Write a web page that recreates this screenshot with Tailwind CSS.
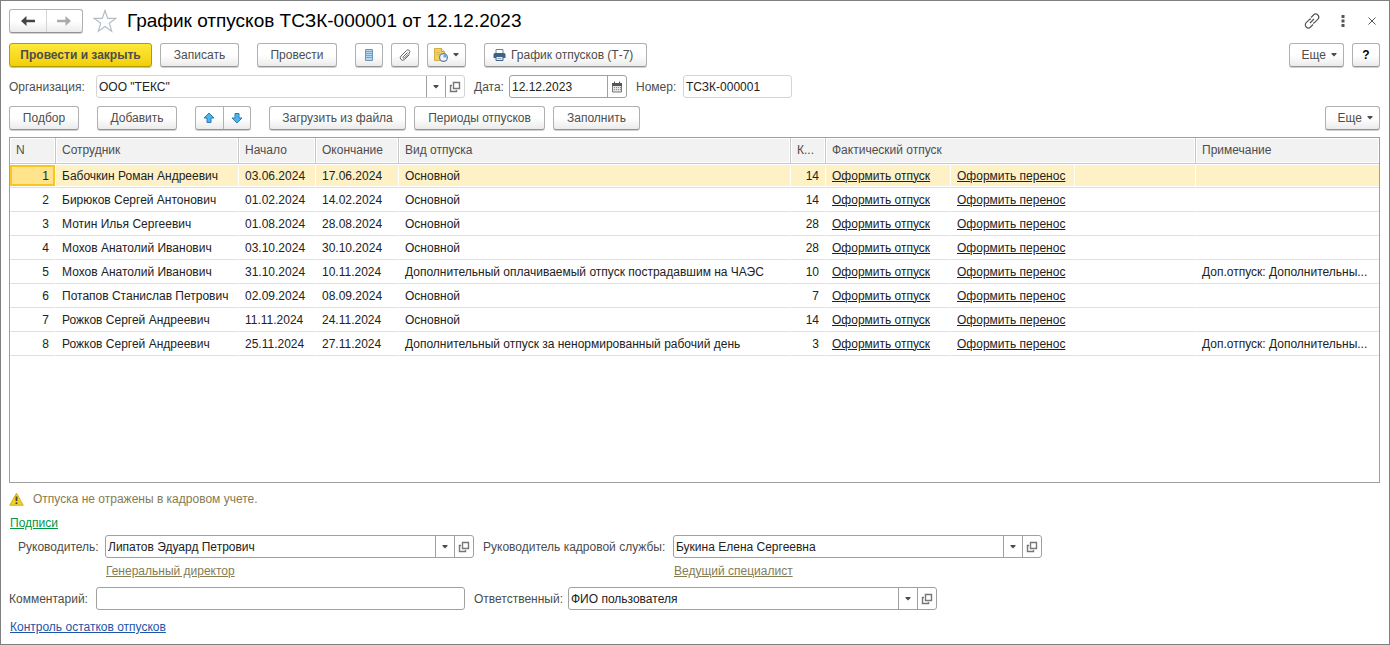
<!DOCTYPE html>
<html lang="ru">
<head>
<meta charset="utf-8">
<title>График отпусков ТСЗК-000001 от 12.12.2023</title>
<script src="https://cdn.jsdelivr.net/npm/@tailwindcss/browser@4"></script>
</head>
<body class="bg-white font-['Liberation_Sans',Arial,sans-serif] text-[12px] leading-4 text-[#4d4d4d]">
<svg class="hidden" aria-hidden="true">
  <symbol id="open" viewBox="0 0 12 12"><path d="M4.500 1.500h6v6h-6zM3 4.500H1.500v6h6V9" fill="none" stroke="#777" stroke-width="1.400"/></symbol>
  <symbol id="caret" viewBox="0 0 6 4"><path d="M.5 0h5v1L3 3.500.5 1z" fill="#4d4d4d"/></symbol>
</svg>
<main class="flex min-h-screen flex-col border border-[#808080] pt-2 pr-[9px] pb-[9px] pl-2">

  <header class="flex h-6 items-center">
    <div class="flex h-6 w-[74px] rounded-[3px] border border-[#b0b0b0] border-b-[#949494] bg-linear-to-b from-white from-50% to-[#ebebeb] shadow-[0_1px_0_#d0d0d0]">
      <button type="button" aria-label="Назад" class="flex flex-1 items-center justify-center border-r border-[#d4d4d4]"><svg class="h-3 w-4" viewBox="0 0 16 12"><path d="M6.500 1v3.800H15v2.400H6.500V11L1 6z" fill="#444"/></svg></button>
      <button type="button" aria-label="Вперед" class="flex flex-1 items-center justify-center"><svg class="h-3 w-4" viewBox="0 0 16 12"><path d="M9.500 1v3.800H1v2.400h8.500V11L15 6z" fill="#aaa"/></svg></button>
    </div>
    <button type="button" aria-label="В избранное" class="ml-2.5"><svg class="h-6 w-6" viewBox="0 0 24 24"><path d="M12 1.500l2.700 7.900h8.100l-6.500 4.900 2.400 7.900-6.700-4.700-6.700 4.700 2.400-7.900-6.500-4.900h8.100z" fill="none" stroke="#b4bcc6" stroke-width="1.200"/></svg></button>
    <h1 class="ml-2.5 text-[19px] leading-6 text-black">График отпусков ТСЗК-000001 от 12.12.2023</h1>
    <div class="ml-auto flex items-center gap-[17px]">
      <button type="button" aria-label="Ссылка"><svg class="h-4 w-4" viewBox="0 0 16 16" fill="none" stroke="#555" stroke-width="1.200"><path d="M7 4.500l2.500-2.500a2.900 2.900 0 0 1 4.300 4.300l-3.100 3.100a2.900 2.900 0 0 1-1.700.8M9 11.500l-2.500 2.500a2.900 2.900 0 0 1-4.300-4.300l3.100-3.100a2.900 2.900 0 0 1 1.700-.8M6 10l4-4"/></svg></button>
      <button type="button" aria-label="Меню"><svg class="h-4 w-3" viewBox="0 0 12 16" fill="#555"><path d="M4.500 2h3v3h-3zM4.500 6.500h3v3h-3zM4.500 11h3v3h-3z"/></svg></button>
      <button type="button" aria-label="Закрыть" class="pr-0.5"><svg class="h-4 w-3" viewBox="0 0 12 16" stroke="#555"><path d="M2.500 4.500l7 7M9.500 4.500l-7 7"/></svg></button>
    </div>
  </header>

  <div class="mt-2.5 flex h-6 items-stretch">
    <button type="button" class="w-[143px] rounded-[3px] border border-[#b39b00] bg-linear-to-b from-[#ffe838] to-[#f2cf00] font-bold shadow-[0_1px_0_#d0c890]">Провести и закрыть</button>
    <button type="button" class="ml-2 w-[79px] rounded-[3px] border border-[#b0b0b0] border-b-[#949494] bg-linear-to-b from-white from-50% to-[#ebebeb] shadow-[0_1px_0_#d0d0d0]">Записать</button>
    <button type="button" class="ml-[18px] w-20 rounded-[3px] border border-[#b0b0b0] border-b-[#949494] bg-linear-to-b from-white from-50% to-[#ebebeb] shadow-[0_1px_0_#d0d0d0]">Провести</button>
    <button type="button" aria-label="Список" class="ml-[18px] flex w-7 items-center justify-center rounded-[3px] border border-[#b0b0b0] border-b-[#949494] bg-linear-to-b from-white from-50% to-[#ebebeb] shadow-[0_1px_0_#d0d0d0]"><svg class="h-3 w-2" viewBox="0 0 8 12"><path d="M.5.5h7v11h-7z" fill="#b7d6ee" stroke="#6b96b8"/><path d="M1 2.500h6M1 4.500h6M1 6.500h6M1 8.500h6" stroke="#7ba6c8"/></svg></button>
    <button type="button" aria-label="Вложения" class="ml-2 flex w-7 items-center justify-center rounded-[3px] border border-[#b0b0b0] border-b-[#949494] bg-linear-to-b from-white from-50% to-[#ebebeb] shadow-[0_1px_0_#d0d0d0]"><svg class="h-3 w-3" viewBox="0 0 12 12" fill="none" stroke="#666"><path d="M8.500 3.500L4.200 7.800a.8.8 0 0 0 1.200 1.200l4.900-4.900a1.800 1.800 0 0 0-2.700-2.700L2 7a2.400 2.400 0 0 0 3.500 3.500L10.500 5.500"/></svg></button>
    <button type="button" aria-label="Напоминание" class="ml-2 flex w-[39px] items-center justify-center gap-[5px] rounded-[3px] border border-[#b0b0b0] border-b-[#949494] bg-linear-to-b from-white from-50% to-[#ebebeb] shadow-[0_1px_0_#d0d0d0]"><svg class="h-[14px] w-[14px]" viewBox="0 0 14 14"><path d="M.5.5h7l3 3v9H.5z" fill="#f3cf63" stroke="#d4ae48"/><path d="M7.500.5v3h3" fill="#fff3c4" stroke="#c9a23a"/><path d="M2 4.500h4M2 6.500h4" stroke="#dcb650"/><circle cx="9.500" cy="9.500" r="3.900" fill="#eef5fc" stroke="#5d7fa8" stroke-width="1.200"/><path d="M9.500 9.500V6.300a3.200 3.200 0 0 1 3.200 3.200z" fill="#6ea3dc"/></svg><svg class="h-1 w-1.5"><use href="#caret"/></svg></button>
    <button type="button" class="ml-[18px] flex w-[163px] items-center justify-start gap-[5px] rounded-[3px] border border-[#b0b0b0] border-b-[#949494] bg-linear-to-b from-white from-50% to-[#ebebeb] pl-2 shadow-[0_1px_0_#d0d0d0]"><svg class="h-3 w-[13px]" viewBox="0 0 13 12"><path d="M3 .5h7v4H3z" fill="#fff" stroke="#6b8299"/><path d="M.5 5.500a1.500 1.500 0 0 1 1.500-1.500h9a1.500 1.500 0 0 1 1.500 1.500V9H.5z" fill="#3e6285"/><path d="M3 7.500h7v4H3z" fill="#e8f0f7" stroke="#3e6285"/><path d="M4.500 9.500h4" stroke="#8aa5bd"/></svg>График отпусков (Т-7)</button>
    <button type="button" class="ml-auto flex w-[55px] items-center justify-end gap-[5px] rounded-[3px] border border-[#b0b0b0] border-b-[#949494] bg-linear-to-b from-white from-50% to-[#ebebeb] pr-1.5 shadow-[0_1px_0_#d0d0d0]">Еще <svg class="h-1 w-1.5"><use href="#caret"/></svg></button>
    <button type="button" class="ml-2 w-7 rounded-[3px] border border-[#b0b0b0] border-b-[#949494] bg-linear-to-b from-white from-50% to-[#ebebeb] font-bold text-black shadow-[0_1px_0_#d0d0d0]">?</button>
  </div>

  <div class="mt-2 flex h-[23px] items-center">
    <label for="org" class="w-[87px]">Организация:</label>
    <div class="flex h-full w-[369px] rounded-[3px] border border-[#d4d4d4]">
      <input id="org" type="text" value="ООО &quot;ТЕКС&quot;" class="min-w-0 flex-1 px-0.5 text-[#222] outline-none">
      <button type="button" aria-label="Выбрать" class="flex w-[19px] items-center justify-center border-l border-[#a0a0a0]"><svg class="h-1 w-1.5"><use href="#caret"/></svg></button>
      <button type="button" aria-label="Открыть" class="flex w-[19px] items-center justify-center border-l border-[#a0a0a0]"><svg class="h-3 w-3"><use href="#open"/></svg></button>
    </div>
    <label for="date" class="ml-[9px] w-[35px]">Дата:</label>
    <div class="flex h-full w-[118px] rounded-[3px] border border-[#a0a0a0]">
      <input id="date" type="text" value="12.12.2023" class="min-w-0 flex-1 px-0.5 text-[#222] outline-none">
      <button type="button" aria-label="Календарь" class="flex w-[19px] items-center justify-center border-l border-[#a0a0a0]"><svg class="h-3 w-3" viewBox="0 0 12 12"><path d="M1.500 2.500h9v8.500h-9z" fill="#e4e4e4" stroke="#777"/><path d="M1 2h10v3H1z" fill="#555"/><path d="M3.500 .5v2M8.500 .5v2" stroke="#555"/><path d="M3 6.500h7M3 8.500h7" stroke="#888" stroke-dasharray="1 1"/></svg></button>
    </div>
    <label for="num" class="ml-[9px] w-[47px]">Номер:</label>
    <input id="num" type="text" value="ТСЗК-000001" class="h-full w-[109px] rounded-[3px] border border-[#d4d4d4] px-0.5 text-[#222] outline-none">
  </div>

  <div class="mt-2 flex h-6 items-stretch">
    <button type="button" class="w-[70px] rounded-[3px] border border-[#b0b0b0] border-b-[#949494] bg-linear-to-b from-white from-50% to-[#ebebeb] shadow-[0_1px_0_#d0d0d0]">Подбор</button>
    <button type="button" class="ml-[18px] w-20 rounded-[3px] border border-[#b0b0b0] border-b-[#949494] bg-linear-to-b from-white from-50% to-[#ebebeb] shadow-[0_1px_0_#d0d0d0]">Добавить</button>
    <div class="ml-[18px] flex w-14 rounded-[3px] border border-[#b0b0b0] border-b-[#949494] bg-linear-to-b from-white from-50% to-[#ebebeb] shadow-[0_1px_0_#d0d0d0]">
      <button type="button" aria-label="Вверх" class="flex flex-1 items-center justify-center border-r border-[#b0b0b0]"><svg class="h-3 w-3" viewBox="0 0 12 12"><path d="M6 1l5 5H8v4.500H4V6H1z" fill="#4db4ee" stroke="#2a7db5" stroke-linejoin="round"/></svg></button>
      <button type="button" aria-label="Вниз" class="flex flex-1 items-center justify-center"><svg class="h-3 w-3" viewBox="0 0 12 12"><path d="M6 11l5-5H8V1.500H4V6H1z" fill="#4db4ee" stroke="#2a7db5" stroke-linejoin="round"/></svg></button>
    </div>
    <button type="button" class="ml-[18px] w-[137px] rounded-[3px] border border-[#b0b0b0] border-b-[#949494] bg-linear-to-b from-white from-50% to-[#ebebeb] shadow-[0_1px_0_#d0d0d0]">Загрузить из файла</button>
    <button type="button" class="ml-2 w-[131px] rounded-[3px] border border-[#b0b0b0] border-b-[#949494] bg-linear-to-b from-white from-50% to-[#ebebeb] shadow-[0_1px_0_#d0d0d0]">Периоды отпусков</button>
    <button type="button" class="ml-2 w-[87px] rounded-[3px] border border-[#b0b0b0] border-b-[#949494] bg-linear-to-b from-white from-50% to-[#ebebeb] shadow-[0_1px_0_#d0d0d0]">Заполнить</button>
    <button type="button" class="ml-auto flex w-[55px] items-center justify-end gap-[5px] rounded-[3px] border border-[#b0b0b0] border-b-[#949494] bg-linear-to-b from-white from-50% to-[#ebebeb] pr-1.5 shadow-[0_1px_0_#d0d0d0]">Еще <svg class="h-1 w-1.5"><use href="#caret"/></svg></button>
  </div>

  <div class="mt-[7px] flex-1 border border-[#a0a0a0]">
    <table class="w-full table-fixed border-separate border-spacing-0 text-[#222] [&_a]:underline [&_a]:underline-offset-1 [&_td]:h-6 [&_td]:truncate [&_td]:border-r [&_td]:border-b [&_td]:border-r-white [&_td]:border-b-[#e0e0e0] [&_td]:px-1.5 [&_th]:h-[26px] [&_th]:border-r [&_th]:border-b [&_th]:border-[#c8c8c8] [&_th]:bg-[#f2f2f2] [&_th]:px-1.5 [&_th]:pb-0.5 [&_th]:text-left [&_th]:font-normal [&_th]:whitespace-nowrap [&_th]:text-[#4d4d4d] [&_th]:shadow-[inset_0_0_0_1px_#fff] [&_th:last-child]:border-r-0 [&_td:last-child]:border-r-0">
      <colgroup><col class="w-[46px]"><col class="w-[183px]"><col class="w-[77px]"><col class="w-[83px]"><col class="w-[392px]"><col class="w-[35px]"><col class="w-[125px]"><col class="w-[124px]"><col class="w-[121px]"><col></colgroup>
      <thead>
        <tr><th>N</th><th>Сотрудник</th><th>Начало</th><th>Окончание</th><th>Вид отпуска</th><th>К...</th><th colspan="3">Фактический отпуск</th><th>Примечание</th></tr>
      </thead>
      <tbody>
        <tr class="[&_td]:bg-[#fef1c6] [&_td]:shadow-[inset_0_1px_0_#fff,inset_0_-1px_0_#fff] [&_td:first-child]:bg-[#ffe48d] [&_td:first-child]:shadow-[inset_0_1px_0_#fff,inset_0_-1px_0_#fff,inset_0_3px_0_#f9c51f,inset_0_-3px_0_#f9c51f,inset_2px_0_0_#f9c51f,inset_-2px_0_0_#f9c51f]"><td class="text-right">1</td><td>Бабочкин Роман Андреевич</td><td>03.06.2024</td><td>17.06.2024</td><td>Основной</td><td class="text-right">14</td><td><a href="#">Оформить отпуск</a></td><td><a href="#">Оформить перенос</a></td><td></td><td></td></tr>
        <tr><td class="text-right">2</td><td>Бирюков Сергей Антонович</td><td>01.02.2024</td><td>14.02.2024</td><td>Основной</td><td class="text-right">14</td><td><a href="#">Оформить отпуск</a></td><td><a href="#">Оформить перенос</a></td><td></td><td></td></tr>
        <tr><td class="text-right">3</td><td>Мотин Илья Сергеевич</td><td>01.08.2024</td><td>28.08.2024</td><td>Основной</td><td class="text-right">28</td><td><a href="#">Оформить отпуск</a></td><td><a href="#">Оформить перенос</a></td><td></td><td></td></tr>
        <tr><td class="text-right">4</td><td>Мохов Анатолий Иванович</td><td>03.10.2024</td><td>30.10.2024</td><td>Основной</td><td class="text-right">28</td><td><a href="#">Оформить отпуск</a></td><td><a href="#">Оформить перенос</a></td><td></td><td></td></tr>
        <tr><td class="text-right">5</td><td>Мохов Анатолий Иванович</td><td>31.10.2024</td><td>10.11.2024</td><td>Дополнительный оплачиваемый отпуск пострадавшим на ЧАЭС</td><td class="text-right">10</td><td><a href="#">Оформить отпуск</a></td><td><a href="#">Оформить перенос</a></td><td></td><td>Доп.отпуск: Дополнительны...</td></tr>
        <tr><td class="text-right">6</td><td>Потапов Станислав Петрович</td><td>02.09.2024</td><td>08.09.2024</td><td>Основной</td><td class="text-right">7</td><td><a href="#">Оформить отпуск</a></td><td><a href="#">Оформить перенос</a></td><td></td><td></td></tr>
        <tr><td class="text-right">7</td><td>Рожков Сергей Андреевич</td><td>11.11.2024</td><td>24.11.2024</td><td>Основной</td><td class="text-right">14</td><td><a href="#">Оформить отпуск</a></td><td><a href="#">Оформить перенос</a></td><td></td><td></td></tr>
        <tr><td class="text-right">8</td><td>Рожков Сергей Андреевич</td><td>25.11.2024</td><td>27.11.2024</td><td>Дополнительный отпуск за ненормированный рабочий день</td><td class="text-right">3</td><td><a href="#">Оформить отпуск</a></td><td><a href="#">Оформить перенос</a></td><td></td><td>Доп.отпуск: Дополнительны...</td></tr>
      </tbody>
    </table>
  </div>

  <p class="mt-2 flex items-center gap-[9px] text-[#857c53]"><svg class="h-[14px] w-[15px]" viewBox="0 0 15 14"><path d="M7.500 1.200l6.700 12H.8z" fill="#f2d21f" stroke="#cfae1c" stroke-linejoin="round"/><path d="M7.500 4.500v4.500M7.500 10.200v1.800" stroke="#444" stroke-width="1.800"/></svg>Отпуска не отражены в кадровом учете.</p>
  <div class="mt-2 flex pl-px"><a href="#" class="text-[#009646] underline underline-offset-1">Подписи</a></div>

  <div class="mt-1 flex">
    <label for="head" class="flex h-[23px] w-24 items-center pl-[9px]">Руководитель:</label>
    <div class="w-[369px]">
      <div class="flex h-[23px] rounded-[3px] border border-[#a0a0a0]">
        <input id="head" type="text" value="Липатов Эдуард Петрович" class="min-w-0 flex-1 px-0.5 text-[#222] outline-none">
        <button type="button" aria-label="Выбрать" class="flex w-[19px] items-center justify-center border-l border-[#a0a0a0]"><svg class="h-1 w-1.5"><use href="#caret"/></svg></button>
        <button type="button" aria-label="Открыть" class="flex w-[19px] items-center justify-center border-l border-[#a0a0a0]"><svg class="h-3 w-3"><use href="#open"/></svg></button>
      </div>
      <div class="mt-[5px] flex pl-px"><a href="#" class="text-[#857c53] underline underline-offset-1">Генеральный директор</a></div>
    </div>
    <label for="hr" class="ml-[9px] flex h-[23px] w-[190px] items-center">Руководитель кадровой службы:</label>
    <div class="w-[369px]">
      <div class="flex h-[23px] rounded-[3px] border border-[#a0a0a0]">
        <input id="hr" type="text" value="Букина Елена Сергеевна" class="min-w-0 flex-1 px-0.5 text-[#222] outline-none">
        <button type="button" aria-label="Выбрать" class="flex w-[19px] items-center justify-center border-l border-[#a0a0a0]"><svg class="h-1 w-1.5"><use href="#caret"/></svg></button>
        <button type="button" aria-label="Открыть" class="flex w-[19px] items-center justify-center border-l border-[#a0a0a0]"><svg class="h-3 w-3"><use href="#open"/></svg></button>
      </div>
      <div class="mt-[5px] flex pl-px"><a href="#" class="text-[#857c53] underline underline-offset-1">Ведущий специалист</a></div>
    </div>
  </div>

  <div class="mt-2 flex h-[23px] items-center">
    <label for="comment" class="w-[87px]">Комментарий:</label>
    <input id="comment" type="text" class="h-full w-[369px] rounded-[3px] border border-[#a0a0a0] px-0.5 text-[#222] outline-none">
    <label for="resp" class="ml-[9px] w-[94px]">Ответственный:</label>
    <div class="flex h-full w-[369px] rounded-[3px] border border-[#a0a0a0]">
      <input id="resp" type="text" value="ФИО пользователя" class="min-w-0 flex-1 px-0.5 text-[#222] outline-none">
      <button type="button" aria-label="Выбрать" class="flex w-[19px] items-center justify-center border-l border-[#a0a0a0]"><svg class="h-1 w-1.5"><use href="#caret"/></svg></button>
      <button type="button" aria-label="Открыть" class="flex w-[19px] items-center justify-center border-l border-[#a0a0a0]"><svg class="h-3 w-3"><use href="#open"/></svg></button>
    </div>
  </div>
  <div class="mt-[9px] flex pl-px"><a href="#" class="text-[#1d55a8] underline underline-offset-1">Контроль остатков отпусков</a></div>
</main>
</body>
</html>
